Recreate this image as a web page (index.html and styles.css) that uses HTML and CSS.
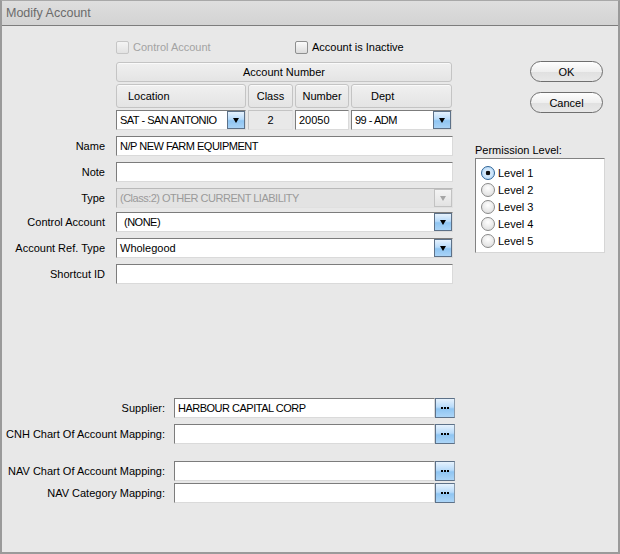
FILE: index.html
```html
<!DOCTYPE html>
<html>
<head>
<meta charset="utf-8">
<link rel="stylesheet" href="styles.css">
</head>
<body>
<div class="window">
  <div class="titlebar">Modify Account</div>
  <div class="content">
    <div class="main">
      <div class="checks">
        <label class="check disabled"><span class="box"></span>Control Account</label>
        <label class="check"><span class="box"></span>Account is Inactive</label>
      </div>
      <div class="acct">
        <div class="hcell total">Account Number</div>
        <div class="hcell loc">Location</div>
        <div class="hcell">Class</div>
        <div class="hcell">Number</div>
        <div class="hcell dept">Dept</div>
        <div class="input combo"><span class="caps">SAT - SAN ANTONIO</span><span class="drop"></span></div>
        <div class="input ro">2</div>
        <div class="input">20050</div>
        <div class="input combo"><span class="caps">99 - ADM</span><span class="drop"></span></div>
      </div>
      <div class="fields">
        <div class="row"><label>Name</label><div class="input"><span class="caps">N/P NEW FARM EQUIPMENT</span></div></div>
        <div class="row"><label>Note</label><div class="input"></div></div>
        <div class="row"><label>Type</label><div class="input combo off"><span class="caps">(Class:2) OTHER CURRENT LIABILITY</span><span class="drop"></span></div></div>
        <div class="row tight"><label>Control Account</label><div class="input combo"><span class="caps pad">(NONE)</span><span class="drop"></span></div></div>
        <div class="row"><label>Account Ref. Type</label><div class="input combo"><span>Wholegood</span><span class="drop"></span></div></div>
        <div class="row"><label>Shortcut ID</label><div class="input"></div></div>
      </div>
      <div class="links">
        <div class="row supplier"><label>Supplier:</label><div class="lookup"><div class="input"><span class="caps">HARBOUR CAPITAL CORP</span></div><span class="ell"></span></div></div>
        <div class="row"><label>CNH Chart Of Account Mapping:</label><div class="lookup"><div class="input"></div><span class="ell"></span></div></div>
        <div class="row nav"><label>NAV Chart Of Account Mapping:</label><div class="lookup"><div class="input"></div><span class="ell"></span></div></div>
        <div class="row navcat"><label>NAV Category Mapping:</label><div class="lookup"><div class="input"></div><span class="ell"></span></div></div>
      </div>
    </div>
    <div class="side">
      <div class="btn">OK</div>
      <div class="btn cancel">Cancel</div>
      <div class="perm-label">Permission Level:</div>
      <div class="perm">
        <div class="opt"><span class="rad on"></span>Level 1</div>
        <div class="opt"><span class="rad"></span>Level 2</div>
        <div class="opt"><span class="rad"></span>Level 3</div>
        <div class="opt"><span class="rad"></span>Level 4</div>
        <div class="opt"><span class="rad"></span>Level 5</div>
      </div>
    </div>
  </div>
</div>
</body>
</html>
```
FILE: styles.css
```css
html, body {
  margin: 0;
  padding: 0;
}
body {
  font-family: "Liberation Sans", Arial, sans-serif;
  font-size: 11px;
  color: #000;
  background: #e8e8e8;
}
.window {
  width: 620px;
  height: 554px;
  box-sizing: border-box;
  border: 2px solid #9a9a9a;
  border-top: 1px solid #a8a8a8;
  background: #e8e8e8;
  display: flex;
  flex-direction: column;
}
.titlebar {
  height: 24px;
  line-height: 24px;
  border-bottom: 1px solid #7d7d7d;
  background: linear-gradient(#dedede, #d3d3d3);
  color: #6b6b6b;
  font-size: 12.5px;
  padding-left: 4px;
}
.content {
  display: flex;
  flex: 1;
}
.main {
  width: 459px;
}
.side {
  flex: 1;
  padding-top: 35px;
}

/* checkboxes */
.checks {
  display: flex;
  height: 14px;
  margin: 14px 0 0 114px;
  align-items: center;
}
.check {
  display: flex;
  align-items: center;
  gap: 4px;
}
.check:first-child {
  width: 179px;
}
.box {
  width: 13px;
  height: 13px;
  box-sizing: border-box;
  border: 1px solid #8e8f8f;
  border-radius: 2px;
  background: linear-gradient(#fbfbfb, #dcdcdc);
}
.disabled {
  color: #a3a3a3;
}
.disabled .box {
  border-color: #c6c6c6;
  background: linear-gradient(#f4f4f4, #e3e3e3);
}

/* account number grid */
.acct {
  display: grid;
  grid-template-columns: 130px 45px 54px 101px;
  grid-template-rows: 20px 24px 20px;
  column-gap: 2px;
  row-gap: 2px;
  width: 336px;
  margin: 8px 0 0 114px;
}
.hcell {
  box-sizing: border-box;
  border: 1px solid #c4c4c4;
  border-radius: 3px;
  background: linear-gradient(#f0f0f0, #e4e4e4);
  box-shadow: inset 0 1px #fafafa;
  display: flex;
  align-items: center;
  justify-content: center;
}
.hcell.total {
  grid-column: 1 / -1;
}
.hcell.loc {
  justify-content: flex-start;
  padding-left: 11px;
}
.hcell.dept {
  justify-content: flex-start;
  padding-left: 19px;
}

/* inputs */
.input {
  box-sizing: border-box;
  height: 20px;
  background: #fff;
  border: 1px solid;
  border-color: #7c7c7c #dadada #dadada #7c7c7c;
  display: flex;
  align-items: center;
  padding-left: 3px;
  white-space: nowrap;
  overflow: hidden;
}
.input.ro {
  background: #e9e9e9;
  border-color: #c4c4c4 #e2e2e2 #e2e2e2 #c4c4c4;
  justify-content: center;
  padding-left: 0;
}
.caps {
  letter-spacing: -0.5px;
}
.caps.pad {
  padding-left: 4px;
}
.combo .drop {
  margin-left: auto;
  width: 18px;
  height: 18px;
  flex: none;
  box-sizing: border-box;
  border: 1px solid #5d7188;
  background: linear-gradient(#e6f2fd, #b8dbfa 45%, #8fc5f2 55%, #a9d3f6);
  display: flex;
  align-items: center;
  justify-content: center;
}
.combo .drop::after {
  content: "";
  border-left: 3.5px solid transparent;
  border-right: 3.5px solid transparent;
  border-top: 5px solid #000;
  margin-top: 1px;
}
.combo.off {
  background: #e3e3e3;
  color: #9a9a9a;
  border-color: #b9b9b9 #e0e0e0 #e0e0e0 #b9b9b9;
}
.combo.off .drop {
  border-color: #c2c2c2;
  background: linear-gradient(#f4f4f4, #e2e2e2);
}
.combo.off .drop::after {
  border-top-color: #a6a6a6;
}

/* form rows */
.row {
  display: flex;
  align-items: center;
  height: 20px;
  margin-top: 6px;
}
.row.tight {
  margin-top: 4px;
}
.fields .row label {
  width: 103px;
  margin-right: 11px;
  text-align: right;
}
.fields .input {
  width: 337px;
}
.links .row label {
  width: 163px;
  margin-right: 9px;
  text-align: right;
}
.row.supplier {
  margin-top: 114px;
}
.row.nav {
  margin-top: 17px;
}
.row.navcat {
  margin-top: 2px;
}
.lookup {
  display: flex;
  width: 281px;
  height: 20px;
}
.lookup .input {
  flex: 1;
}
.ell {
  width: 20px;
  height: 20px;
  box-sizing: border-box;
  border: 1px solid #5d7188;
  border-right-color: #8a9aaa;
  background: linear-gradient(#e6f2fd, #b8dbfa 45%, #8fc5f2 55%, #acd5f7);
  display: flex;
  align-items: center;
  justify-content: center;
}
.ell::after {
  content: "";
  width: 2px;
  height: 2px;
  background: #000;
  box-shadow: 3px 0 #000, -3px 0 #000;
}

/* side buttons */
.btn {
  box-sizing: border-box;
  width: 73px;
  height: 21px;
  margin-left: 69px;
  border: 1px solid #6f6f6f;
  border-radius: 11px;
  background: linear-gradient(#fefefe, #efefef 50%, #e0e0e0 51%, #e8e8e8);
  display: flex;
  align-items: center;
  justify-content: center;
}
.btn.cancel {
  margin-top: 10px;
}
.perm-label {
  margin: 31px 0 0 14px;
  line-height: 13px;
}
.perm {
  box-sizing: border-box;
  width: 130px;
  height: 95px;
  margin: 1px 0 0 14px;
  background: #fff;
  border: 1px solid;
  border-color: #828282 #d6d6d6 #d6d6d6 #828282;
  padding: 5px 0 0 5px;
}
.opt {
  display: flex;
  align-items: center;
  gap: 3px;
  height: 17px;
}
.rad {
  width: 14px;
  height: 14px;
  box-sizing: border-box;
  border-radius: 50%;
  border: 1px solid #8a8a8a;
  background: radial-gradient(circle at 50% 35%, #ffffff, #e4e4e4 70%, #d4d4d4);
}
.rad.on {
  border-color: #2f6496;
  background: radial-gradient(circle, #111 0 2px, #d9ecfc 2.6px, #a8d0f4 100%);
}
```
